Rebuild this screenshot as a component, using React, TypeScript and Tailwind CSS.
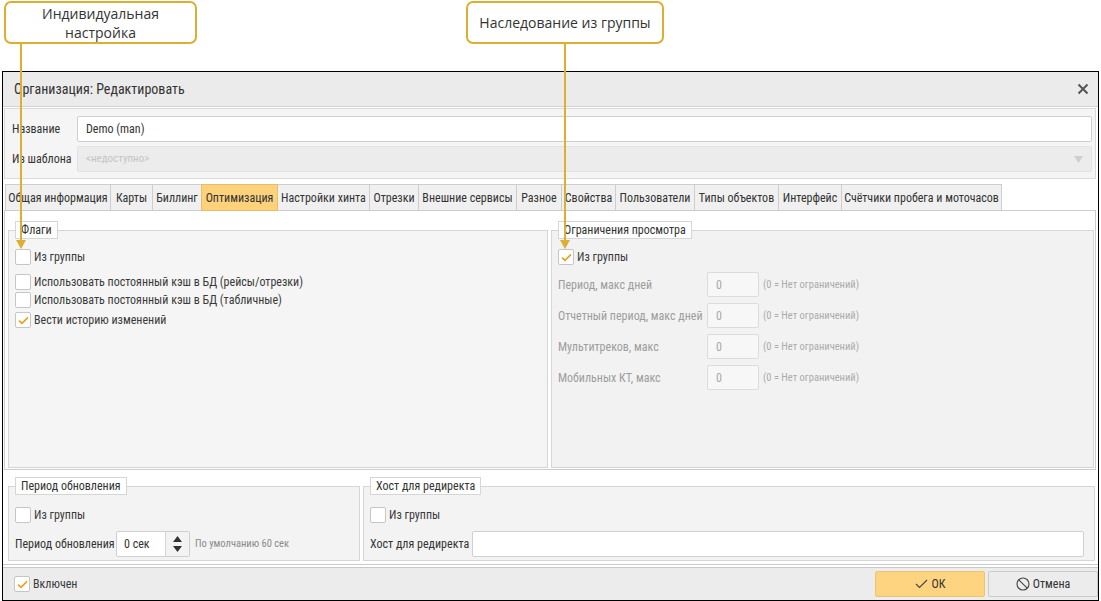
import React from "react";

const tabs = [
    { label: "Общая информация", w: "w-[106px]" },
    { label: "Карты", w: "w-[43px]" },
    { label: "Биллинг", w: "w-[50px]" },
    { label: "Оптимизация", w: "w-[77px]", active: true },
    { label: "Настройки хинта", w: "w-[93px]" },
    { label: "Отрезки", w: "w-[50px]" },
    { label: "Внешние сервисы", w: "w-[99px]" },
    { label: "Разное", w: "w-[46px]" },
    { label: "Свойства", w: "w-[55px]" },
    { label: "Пользователи", w: "w-[80px]" },
    { label: "Типы объектов", w: "w-[85px]" },
    { label: "Интерфейс", w: "w-[64px]" },
    { label: "Счётчики пробега и моточасов", w: "w-[161px]" },
];

const limits = [
    "Период, макс дней",
    "Отчетный период, макс дней",
    "Мультитреков, макс",
    "Мобильных КТ, макс",
];

const Checkbox = ({ checked }: { checked?: boolean }) => (
    <span className="flex h-[16px] w-[16px] shrink-0 items-center justify-center rounded-[2px] border border-[#c6c6c6] bg-white">
        {checked && (
            <svg width="11" height="9" viewBox="0 0 11 9">
                <path d="M1 4.6 L4 7.4 L10 1.4" fill="none" stroke="#e5a21a" strokeWidth="1.6" />
            </svg>
        )}
    </span>
);

const CheckRow = ({ label, checked, className }: { label: string; checked?: boolean; className?: string }) => (
    <div className={"flex items-center gap-[3px] " + (className ?? "")}>
        <Checkbox checked={checked} />
        <span className="whitespace-nowrap text-[12px] text-[#3a3a3a]">{label}</span>
    </div>
);

const Legend = ({ children }: { children: React.ReactNode }) => (
    <legend className="whitespace-nowrap border border-[#d6d6d6] bg-white px-[5px] text-[12px] leading-[16px] text-[#333]">
        {children}
    </legend>
);

const Callout = ({ children, className }: { children: React.ReactNode; className: string }) => (
    <div
        className={
            "absolute top-[1px] flex h-[43px] flex-col items-center justify-center rounded-[7px] border-2 border-[#dcae32] bg-white text-[14px] leading-[19px] text-[#333] [font-family:'Open_Sans',sans-serif] " +
            className
        }
    >
        {children}
    </div>
);

const Pointer = ({ className }: { className: string }) => (
    <div className={"absolute top-[44px] flex flex-col items-center " + className}>
        <div className="h-[196px] w-[2px] bg-[#dcae32]" />
        <svg width="10" height="9" viewBox="0 0 10 9">
            <path d="M0 0 L10 0 L5 9 Z" fill="#dcae32" />
        </svg>
    </div>
);

export default function App() {
    return (
        <div className="relative h-[601px] w-[1101px] overflow-hidden bg-white text-[#333] [font-family:'Roboto_Condensed',Roboto,'Liberation_Sans',sans-serif]">
            <div className="h-[71px]" />

            {/* dialog */}
            <div className="ml-[2px] flex h-[530px] w-[1097px] flex-col border border-black bg-white">
                <div className="flex h-[35px] shrink-0 items-center justify-between border-b border-[#d2d2d2] bg-[#ebebeb] pl-[11px] pr-[9px]">
                    <span className="text-[14px] text-[#333]">Организация: Редактировать</span>
                    <svg width="12" height="12" viewBox="0 0 12 12">
                        <path d="M1.5 1.5 L10.5 10.5 M10.5 1.5 L1.5 10.5" stroke="#555" strokeWidth="2" />
                    </svg>
                </div>

                <div className="flex flex-1 flex-col border-b border-[#c9c9c9] pl-[1px] pr-[2px] pt-[1px]">
                    {/* header fields */}
                    <div className="flex flex-col gap-[4px] border border-[#dadada] bg-[#f5f5f5] pb-[6px] pl-[7px] pr-[3px] pt-[7px]">
                        <div className="flex items-center">
                            <span className="w-[65px] whitespace-nowrap text-[12px]">Название</span>
                            <div className="flex h-[26px] flex-1 items-center rounded-[2px] border border-[#cfcfcf] bg-white px-[8px] text-[12px]">
                                Demo (man)
                            </div>
                        </div>
                        <div className="flex items-center">
                            <span className="w-[65px] whitespace-nowrap text-[12px]">Из шаблона</span>
                            <div className="flex h-[26px] flex-1 items-center justify-between rounded-[2px] border border-[#e2e2e2] bg-[#ececec] pl-[8px] pr-[8px] text-[11px] text-[#c4c4c4]">
                                <span>&lt;недоступно&gt;</span>
                                <svg width="9" height="7" viewBox="0 0 9 7">
                                    <path d="M0 0 L9 0 L4.5 7 Z" fill="#cfcfcf" />
                                </svg>
                            </div>
                        </div>
                    </div>

                    {/* tabs */}
                    <div className="mt-[5px] flex pl-[1px]">
                        {tabs.map((t) => (
                            <div
                                key={t.label}
                                className={
                                    "-ml-px flex h-[27px] items-center justify-center whitespace-nowrap border text-[12px] first:ml-0 " +
                                    t.w +
                                    (t.active
                                        ? " relative z-10 border-[#e6be6c] bg-[#fed17b] text-[#333]"
                                        : " border-[#cdcdcd] bg-[#f0f0f0] text-[#333]")
                                }
                            >
                                {t.label}
                            </div>
                        ))}
                    </div>

                    {/* tab panel */}
                    <div className="-mt-px flex h-[260px] gap-[3px] border border-[#cdcdcd] bg-white pb-[1px] pl-[3px] pr-[1px] pt-[10px]">
                        <fieldset className="w-[540px] border border-[#d6d6d6] bg-[#f5f5f5] px-[6px]">
                            <Legend>Флаги</Legend>
                            <CheckRow className="mt-[9px]" label="Из группы" />
                            <CheckRow className="mt-[7px]" label="Использовать постоянный кэш в БД (рейсы/отрезки)" />
                            <CheckRow className="mt-0" label="Использовать постоянный кэш в БД (табличные)" />
                            <CheckRow className="mt-[2px]" label="Вести историю изменений" checked />
                        </fieldset>
                        <fieldset className="flex-1 border border-[#d6d6d6] bg-[#f2f2f2] px-[6px]">
                            <Legend>Ограничения просмотра</Legend>
                            <CheckRow className="mt-[9px]" label="Из группы" checked />
                            <div className="mt-[6px] flex flex-col gap-[6px]">
                                {limits.map((l) => (
                                    <div key={l} className="flex items-center">
                                        <span className="w-[149px] whitespace-nowrap text-[12px] text-[#9d9d9d]">{l}</span>
                                        <div className="flex h-[25px] w-[52px] items-center rounded-[2px] border border-[#dcdcdc] bg-[#f7f7f7] px-[8px] text-[12px] text-[#a8a8a8]">
                                            0
                                        </div>
                                        <span className="ml-[4px] whitespace-nowrap text-[10.5px] text-[#ababab]">(0 = Нет ограничений)</span>
                                    </div>
                                ))}
                            </div>
                        </fieldset>
                    </div>

                    {/* bottom fieldsets */}
                    <div className="mt-[7px] flex gap-[3px] pl-[4px] pr-[1px]">
                        <fieldset className="h-[84px] w-[352px] border border-[#d6d6d6] bg-[#f3f3f3] px-[6px]">
                            <Legend>Период обновления</Legend>
                            <CheckRow className="mt-[11px]" label="Из группы" />
                            <div className="mt-[7px] flex items-center">
                                <span className="w-[101px] whitespace-nowrap text-[12px]">Период обновления</span>
                                <div className="flex h-[26px] w-[74px] rounded-[2px] border border-[#cfcfcf] bg-white">
                                    <span className="flex flex-1 items-center pl-[7px] text-[12px]">0 сек</span>
                                    <div className="flex w-[24px] flex-col items-center justify-center gap-[4px] border-l border-[#d6d6d6] bg-[#f3f3f3]">
                                        <svg width="9" height="6" viewBox="0 0 9 6">
                                            <path d="M0 6 L9 6 L4.5 0 Z" fill="#333" />
                                        </svg>
                                        <svg width="9" height="6" viewBox="0 0 9 6">
                                            <path d="M0 0 L9 0 L4.5 6 Z" fill="#333" />
                                        </svg>
                                    </div>
                                </div>
                                <span className="ml-[5px] whitespace-nowrap text-[10.5px] text-[#8a8a8a]">По умолчанию 60 сек</span>
                            </div>
                        </fieldset>
                        <fieldset className="h-[84px] flex-1 border border-[#d6d6d6] bg-[#f3f3f3] px-[6px]">
                            <Legend>Хост для редиректа</Legend>
                            <CheckRow className="mt-[11px]" label="Из группы" />
                            <div className="mt-[7px] flex items-center pr-[4px]">
                                <span className="w-[102px] whitespace-nowrap text-[12px]">Хост для редиректа</span>
                                <div className="h-[26px] flex-1 rounded-[2px] border border-[#cfcfcf] bg-white" />
                            </div>
                        </fieldset>
                    </div>
                </div>

                {/* footer */}
                <div className="mt-[2px] flex h-[33px] shrink-0 items-center justify-between border-t border-[#c9c9c9] bg-[#ececec] pl-[11px]">
                    <CheckRow label="Включен" checked />
                    <div className="flex gap-[3px]">
                        <button className="flex h-[26px] w-[110px] items-center justify-center gap-[4px] rounded-[2px] border border-[#edc46e] bg-[#fed480] text-[12px] text-[#333]">
                            <svg width="13" height="10" viewBox="0 0 13 10">
                                <path d="M1 5 L4.5 8.5 L12 1" fill="none" stroke="#444" strokeWidth="1.1" />
                            </svg>
                            ОК
                        </button>
                        <button className="flex h-[26px] w-[110px] items-center justify-center gap-[3px] rounded-[2px] border border-[#cbcbcb] bg-[#ececec] text-[12px] text-[#333]">
                            <svg width="14" height="14" viewBox="0 0 14 14">
                                <circle cx="7" cy="7" r="6" fill="none" stroke="#444" strokeWidth="1.1" />
                                <path d="M2.8 2.8 L11.2 11.2" stroke="#444" strokeWidth="1.1" />
                            </svg>
                            Отмена
                        </button>
                    </div>
                </div>
            </div>

            {/* annotations */}
            <Callout className="left-[4px] w-[193px]">
                <span>Индивидуальная</span>
                <span>настройка</span>
            </Callout>
            <Callout className="left-[466px] w-[198px]">
                <span>Наследование из группы</span>
            </Callout>
            <Pointer className="left-[16px]" />
            <Pointer className="left-[560px]" />
        </div>
    );
}
